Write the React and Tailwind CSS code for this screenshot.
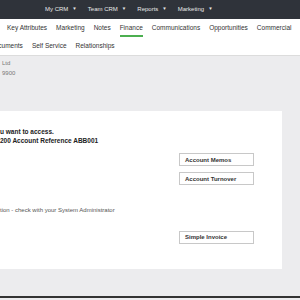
import React from 'react'

const topMenu = ['My CRM', 'Team CRM', 'Reports', 'Marketing']
const tabsOne = [
  'Key Attributes',
  'Marketing',
  'Notes',
  'Finance',
  'Communications',
  'Opportunities',
  'Commercial',
]
const tabsTwo = ['Documents', 'Self Service', 'Relationships']

const ActionButton = ({ label }) => (
  <button className="w-[75px] h-[13px] border border-[#c8c8c8] bg-white text-left pl-[5px] text-[6px] font-bold text-[#333] leading-none">
    {label}
  </button>
)

const App = () => {
  return (
    <div
      className="w-[300px] h-[300px] overflow-hidden bg-white flex flex-col"
      style={{ fontFamily: '"Liberation Sans", Arial, sans-serif' }}
    >
      {/* top bar */}
      <div className="h-[19px] shrink-0 bg-[#2f333a] flex items-center pl-[45px] gap-[11px]">
        {topMenu.map((item) => (
          <span key={item} className="text-[6px] text-[#e8e8e8] whitespace-nowrap flex items-center gap-[4px]">
            {item}
            <span className="text-[4.5px]">▼</span>
          </span>
        ))}
      </div>

      {/* tabs */}
      <div className="h-[18px] shrink-0 flex items-stretch pl-[7px] gap-[9px]">
        {tabsOne.map((tab) => (
          <span
            key={tab}
            className={`text-[6.5px] text-[#333] whitespace-nowrap flex items-center pt-[1px] border-b-2 ${
              tab === 'Finance' ? 'border-[#4caf50]' : 'border-transparent'
            }`}
          >
            {tab}
          </span>
        ))}
      </div>
      <div className="h-[18px] shrink-0 flex items-center ml-[-10px] gap-[9px]">
        {tabsTwo.map((tab) => (
          <span key={tab} className="text-[6.5px] text-[#333] whitespace-nowrap">
            {tab}
          </span>
        ))}
      </div>

      {/* content */}
      <div className="flex-1 bg-[#ececee] border-t border-[#dcdcdc] flex flex-col">
        <div className="h-[55px] shrink-0 pl-[2px] pt-[2px] text-[6px] text-[#777] leading-[10px]">
          <p>Ltd</p>
          <p>9900</p>
        </div>

        <div className="w-[282px] h-[158px] bg-white flex flex-col">
          <div className="pt-[16px] text-[6.5px] font-bold text-[#222] leading-[9px]">
            <p>u want to access.</p>
            <p>200 Account Reference ABB001</p>
          </div>
          <div className="flex flex-col items-start pl-[179px] gap-[6px] mt-[8px]">
            <ActionButton label="Account Memos" />
            <ActionButton label="Account Turnover" />
          </div>
          <p className="mt-[21px] text-[6px] text-[#555] leading-[8px]">
            tion - check with your System Administrator
          </p>
          <div className="pl-[179px] mt-[8px]">
            <ActionButton label="Simple Invoice" />
          </div>
        </div>

        <div className="flex-1" />
        <div className="h-[2px] bg-[#333] shrink-0" />
        <div className="h-[2px] shrink-0" />
      </div>
    </div>
  )
}

export default App
